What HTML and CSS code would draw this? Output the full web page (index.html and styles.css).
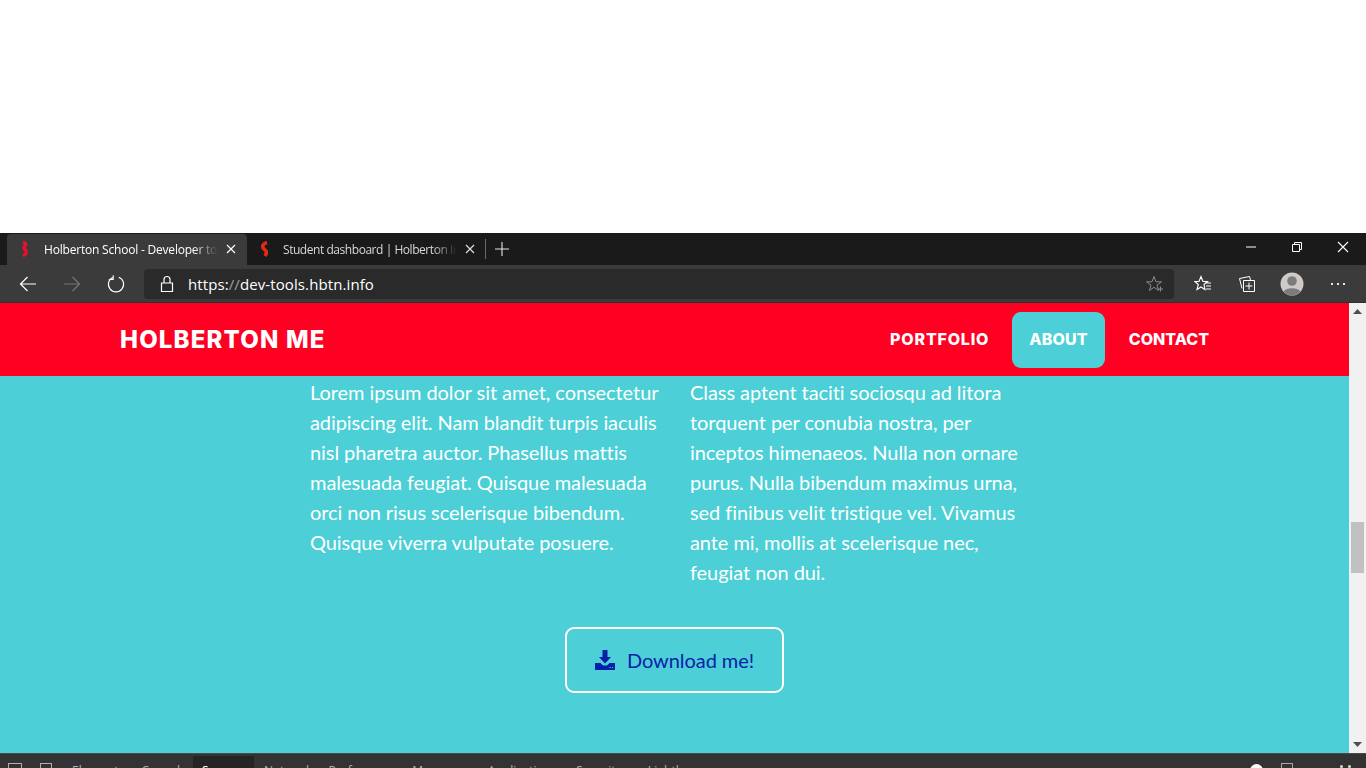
FILE: index.html
```html
<!DOCTYPE html>
<html lang="en">
<head>
<meta charset="utf-8">
<title>Holberton School - Developer tools</title>
<link rel="stylesheet" href="styles.css">
</head>
<body>
<div class="blank"></div>
<div class="tabstrip">
  <div class="tab active">
    <svg class="favicon" viewBox="0 0 12 16"><path d="M4 1.500C7 1.500 7 4 5.500 5.500 4.500 7 5 8 6.500 9 8 11 7.500 13.500 4 14.500" fill="none" stroke="#e8112d" stroke-width="3.400"/></svg>
    <span class="tab-title">Holberton School - Developer tools</span>
    <svg class="tab-close" viewBox="0 0 10 10"><path d="M1 1 9 9M9 1 1 9" stroke="#fff" stroke-width="1.2"/></svg>
  </div>
  <div class="tab inactive">
    <svg class="favicon" viewBox="0 0 12 16"><path d="M8 1.500C3 3 3 6 5 8 8 10 8 12 6 15" fill="none" stroke="#e62a10" stroke-width="3.600"/></svg>
    <span class="tab-title">Student dashboard | Holberton Intranet</span>
    <svg class="tab-close" viewBox="0 0 10 10"><path d="M1 1 9 9M9 1 1 9" stroke="#ddd" stroke-width="1.2"/></svg>
  </div>
  <div class="tab-sep"></div>
  <svg class="new-tab" viewBox="0 0 14 14"><path d="M7 0V14M0 7H14" stroke="#e6e6e6" stroke-width="1.1"/></svg>
  <div class="window-controls">
    <svg class="win-btn" viewBox="0 0 12 12"><path d="M1 6H11" stroke="#fff" stroke-width="1"/></svg>
    <svg class="win-btn" viewBox="0 0 12 12"><path d="M1.500 3.500H8.500V10.500H1.500ZM3.500 3.500V1.500H10.500V8.500H8.500" fill="none" stroke="#fff" stroke-width="1"/></svg>
    <svg class="win-btn" viewBox="0 0 12 12"><path d="M1 1 11 11M11 1 1 11" stroke="#fff" stroke-width="1.1"/></svg>
  </div>
</div>
<div class="toolbar">
  <svg class="nav-btn" viewBox="0 0 18 18"><path d="M17 9H1.500M8.500 2 1.500 9 8.500 16" fill="none" stroke="#fff" stroke-width="1.2"/></svg>
  <svg class="nav-btn" viewBox="0 0 18 18"><path d="M1 9H16.500M9.500 2 16.500 9 9.500 16" fill="none" stroke="#777" stroke-width="1.2"/></svg>
  <svg class="nav-btn" viewBox="0 0 18 18"><path d="M11.800 2.200A7.600 7.600 0 1 1 6.200 2.200M6.200 .2V4.500H1.800" fill="none" stroke="#fff" stroke-width="1.100"/></svg>
  <div class="address">
    <svg class="lock" viewBox="0 0 14 18"><path d="M1.500 8H12.500V16.500H1.500ZM4 8V4.500A3 3 0 0 1 10 4.500V8" fill="none" stroke="#fff" stroke-width="1.2"/></svg>
    <span class="url">https:<span class="url-dim">//</span>dev-tools.hbtn.info</span>
    <svg class="star" viewBox="0 0 18 18"><path d="M8 1.500 10 6.800H15.500L11 10.200 12.600 15.500 8 12.300 3.400 15.500 5 10.200.5 6.800H6ZM12 14H17M14.500 11.500V16.500" fill="none" stroke="#8b8b8b" stroke-width="1"/></svg>
  </div>
  <svg class="tool-btn favs" viewBox="0 0 18 18"><path d="M7 1.500 9 6.500H13.500L10 9.500 11 14.500 7 12 3 14.500 4.300 9.500.8 6.500H5ZM11 8H17M12 11H17M12 14H17" fill="none" stroke="#fff" stroke-width="1.1"/></svg>
  <svg class="tool-btn colls" viewBox="0 0 18 18"><path d="M5.500 5.500H16.500V16.500H5.500ZM11 7.500V14.500M7.500 11H14.500M4 13.500 1.500 3.500 11.500 1.500 12.500 5" fill="none" stroke="#fff" stroke-width="1"/></svg>
  <svg class="avatar" viewBox="0 0 24 24"><circle cx="12" cy="12" r="11.500" fill="#cfcac6"/><circle cx="12" cy="9" r="4.800" fill="#7c7c7c"/><path d="M3.500 19.500C6 15 18 15 20.500 19.500A11.500 11.500 0 0 1 3.500 19.500Z" fill="#7c7c7c"/></svg>
  <div class="more"><i></i><i></i><i></i></div>
</div>
<div class="viewport">
  <main class="page">
    <header class="site-header">
      <a class="brand">HOLBERTON ME</a>
      <nav class="site-nav">
        <a class="nav-link portfolio">PORTFOLIO</a>
        <a class="nav-link current">ABOUT</a>
        <a class="nav-link contact">CONTACT</a>
      </nav>
    </header>
    <section class="about">
      <div class="columns">
        <p>Lorem ipsum dolor sit amet, consectetur adipiscing elit. Nam blandit turpis iaculis nisl pharetra auctor. Phasellus mattis malesuada feugiat. Quisque malesuada orci non risus scelerisque bibendum. Quisque viverra vulputate posuere.</p>
        <p>Class aptent taciti sociosqu ad litora torquent per conubia nostra, per inceptos himenaeos. Nulla non ornare purus. Nulla bibendum maximus urna, sed finibus velit tristique vel. Vivamus ante mi, mollis at scelerisque nec, feugiat non dui.</p>
      </div>
      <a class="download">
        <svg class="download-icon" viewBox="0 0 20 20"><path d="M7.500 0H12.500V7H16L10 13.500 4 7H7.500ZM0 13H5.500L8 15.500H12L14.500 13H20V20H0Z" fill="#0520a8"/><path d="M14.500 17.500H15.600M16.800 17.500H17.900" stroke="#4ccfd6" stroke-width="1"/></svg>
        <span>Download me!</span>
      </a>
    </section>
  </main>
  <div class="scrollbar">
    <svg class="arrow" viewBox="0 0 9 5"><path d="M4.500 0 9 5H0Z" fill="#505050"/></svg>
    <div class="track"><div class="thumb"></div></div>
    <svg class="arrow" viewBox="0 0 9 5"><path d="M0 0H9L4.500 5Z" fill="#505050"/></svg>
  </div>
</div>
<div class="devtools">
  <span class="dt-icon first"></span>
  <span class="dt-icon second"></span>
  <span class="dt-tab elements">Elements</span>
  <span class="dt-tab console">Console</span>
  <span class="dt-tab sources">Sources</span>
  <span class="dt-tab network">Network</span>
  <span class="dt-tab performance">Performance</span>
  <span class="dt-tab memory">Memory</span>
  <span class="dt-tab application">Application</span>
  <span class="dt-tab security">Security</span>
  <span class="dt-tab lighthouse">Lighthouse</span>
  <div class="dt-right">
    <span class="dt-gear"></span>
    <span class="dt-dock"></span>
    <span class="dt-dots"><i></i><i></i></span>
  </div>
</div>
</body>
</html>
```

FILE: styles.css
```css
* { box-sizing: border-box; }
html, body { margin: 0; height: 768px; overflow: hidden; background: #fff; }
body { display: flex; flex-direction: column; font-family: "Open Sans", "Liberation Sans", sans-serif; }
svg { display: block; flex: none; }

.blank { height: 233px; background: #fff; flex: none; }

.tabstrip { height: 32px; flex: none; background: #1a1a1a; display: flex; align-items: flex-end; padding-left: 7px; color: #fff; }
.tab { height: 31px; display: flex; align-items: center; font-size: 12px; letter-spacing: -.2px; padding-bottom: 1px; }
.tab.active { width: 240px; background: #3b3b3b; border-radius: 4px 4px 0 0; padding-left: 12px; padding-right: 11px; }
.tab.inactive { width: 233px; padding-left: 12px; padding-right: 5px; color: #d8d8d8; letter-spacing: -.45px; }
.favicon { width: 12px; height: 16px; margin-right: 13px; }
.inactive .favicon { margin-right: 12px; }
.tab-title { flex: 1; white-space: nowrap; overflow: hidden; -webkit-mask-image: linear-gradient(90deg, #000 86%, transparent); mask-image: linear-gradient(90deg, #000 86%, transparent); }
.tab-close { width: 10px; height: 10px; margin-left: 8px; }
.tab-sep { width: 1px; height: 20px; background: #6a6a6a; margin: 0 9px 6px 5px; }
.new-tab { width: 14px; height: 14px; margin-bottom: 9px; }
.window-controls { margin-left: auto; align-self: stretch; display: flex; align-items: center; gap: 34px; padding: 0 17px 4px 0; }
.win-btn { width: 12px; height: 12px; }

.toolbar { height: 38px; flex: none; background: #3b3b3b; display: flex; align-items: center; padding: 0 20px 0 19px; border-bottom: 1px solid #2f2f2f; }
.nav-btn { width: 18px; height: 18px; margin-right: 26px; }
.nav-btn:nth-child(3) { margin-right: 19px; }
.address { width: 1030px; height: 30px; background: #2a2a2a; border-radius: 4px; display: flex; align-items: center; padding: 0 10px 0 16px; }
.lock { width: 14px; height: 18px; margin-right: 14px; }
.url { font-size: 15px; letter-spacing: .1px; color: #fff; flex: 1; white-space: nowrap; }
.url-dim { color: #a0a0a0; }
.star { width: 18px; height: 18px; }
.tool-btn { width: 18px; height: 18px; }
.favs { margin-left: 20px; }
.colls { margin-left: 26px; }
.avatar { width: 24px; height: 24px; margin-left: 24px; }
.more { display: flex; gap: 4px; margin-left: 27px; }
.more i { width: 2px; height: 2px; background: #e8e8e8; display: block; }

.viewport { height: 450px; flex: none; display: flex; overflow: hidden; }
.page { flex: 1; background: #4ccfd6; display: flex; flex-direction: column; }

.site-header { height: 73px; flex: none; background: #ff0023; display: flex; align-items: center; justify-content: space-between; padding: 0 123px 0 120px; color: #fff; font-family: Inter, "Liberation Sans", sans-serif; font-weight: 800; }
.brand { font-size: 24px; letter-spacing: 1.17px; }
.site-nav { display: flex; gap: 7px; }
.nav-link { font-size: 16px; letter-spacing: .15px; padding: 0 17px; height: 56px; line-height: 54px; border-radius: 9px; }
.nav-link.portfolio { letter-spacing: .8px; padding-right: 16px; }
.nav-link.contact { letter-spacing: 0; }
.nav-link.current { background: #4ccfd6; }

.about { flex: 1; padding-top: 1px; font-family: Lato, "Liberation Sans", sans-serif; }
.columns { display: flex; gap: 28px; padding-left: 310px; }
.columns p { width: 352px; margin: 0; font-size: 20px; line-height: 30px; color: #fff; letter-spacing: -.07px; }
.download { width: 219px; height: 66px; margin: 40px 0 0 565px; border: 2px solid #fff; border-radius: 9px; display: flex; align-items: center; padding-left: 28px; gap: 12px; font-size: 20px; letter-spacing: -.07px; color: #0a22a8; }
.download-icon { width: 20px; height: 20px; }

.scrollbar { width: 17px; flex: none; background: #f1f1f1; display: flex; flex-direction: column; align-items: center; padding: 6px 0; }
.arrow { width: 9px; height: 5px; }
.track { flex: 1; width: 13px; }
.thumb { width: 13px; height: 51px; margin-top: 208px; background: #c1c1c1; }

.devtools { flex: 1; background: #333; border-top: 1px solid #4a4a4a; display: flex; align-items: flex-start; font-size: 12px; color: #b4b4b4; overflow: hidden; line-height: 16px; }
.dt-icon { width: 14px; height: 14px; border: 1px solid #b0b0b0; margin-top: 9px; flex: none; }
.dt-icon.first { margin-left: 8px; }
.dt-icon.second { margin-left: 18px; width: 12px; }
.dt-tab { margin-top: 9px; white-space: nowrap; flex: none; letter-spacing: .1px; }
.elements { margin-left: 20px; }
.console { margin-left: 17px; }
.sources { background: #242424; color: #fff; width: 61px; height: 30px; margin-top: 2px; padding: 7px 0 0 9px; margin-left: 6px; border-radius: 2px 2px 0 0; }
.network { margin-left: 10px; }
.performance { margin-left: 16px; }
.memory { margin-left: 10px; }
.application { margin-left: 28px; }
.security { margin-left: 25px; }
.lighthouse { margin-left: 26px; }
.dt-right { margin-left: auto; display: flex; align-items: flex-start; }
.dt-gear { width: 13px; height: 13px; background: #fff; margin-top: 10px; border-radius: 50%; margin-right: 18px; }
.dt-dock { width: 12px; height: 12px; border: 1px solid #aaa; margin-top: 9px; margin-right: 47px; }
.dt-dots { display: flex; gap: 5px; margin-top: 11px; margin-right: 15px; }
.dt-dots i { width: 3px; height: 3px; background: #ddd; border-radius: 50%; display: block; }
```
